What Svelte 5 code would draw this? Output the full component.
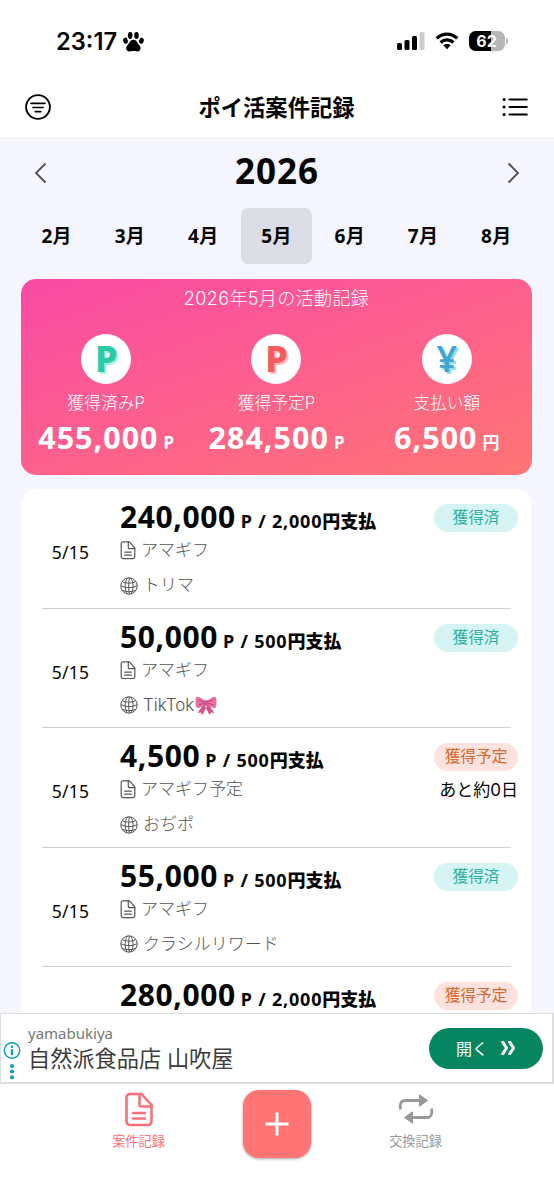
<script lang="ts">
	interface Entry {
		date: string;
		points: string;
		cost: string;
		title: string;
		site: string;
		ribbon?: boolean;
		done: boolean;
		remaining?: string;
	}

	const months = [2, 3, 4, 5, 6, 7, 8];
	let selectedMonth = $state(5);

	const totals = [
		{ kind: 'earned', symbol: 'P', label: '獲得済みP', value: '455,000', unit: 'P' },
		{ kind: 'planned', symbol: 'P', label: '獲得予定P', value: '284,500', unit: 'P' },
		{ kind: 'paid', symbol: '¥', label: '支払い額', value: '6,500', unit: '円' }
	];

	const entries: Entry[] = [
		{ date: '5/15', points: '240,000', cost: '2,000', title: 'アマギフ', site: 'トリマ', done: true },
		{ date: '5/15', points: '50,000', cost: '500', title: 'アマギフ', site: 'TikTok', ribbon: true, done: true },
		{ date: '5/15', points: '4,500', cost: '500', title: 'アマギフ予定', site: 'おぢポ', done: false, remaining: 'あと約0日' },
		{ date: '5/15', points: '55,000', cost: '500', title: 'アマギフ', site: 'クラシルリワード', done: true },
		{ date: '', points: '280,000', cost: '2,000', title: '', site: '', done: false }
	];
</script>

{#snippet docIcon()}
	<svg class="doc" viewBox="0 0 28 34" fill="none" stroke="currentColor" stroke-linejoin="round" stroke-linecap="round">
		<path d="M5 1.5h11.5l10 11V29a3.5 3.5 0 0 1-3.5 3.5H5A3.5 3.5 0 0 1 1.5 29V5A3.5 3.5 0 0 1 5 1.5Z" />
		<path d="M14.5 1.5V12a2 2 0 0 0 2 2h10M8 20.5h12M8 26h12" />
	</svg>
{/snippet}

<div class="screen">
	<div class="status">
		<div class="clock">
			<span>23:17</span>
			<svg class="paw" viewBox="0 0 21 20">
				<ellipse cx="2.5" cy="8.7" rx="2.3" ry="3.1" transform="rotate(-14 2.5 8.7)" />
				<ellipse cx="7.2" cy="3.5" rx="2.3" ry="3.4" />
				<ellipse cx="13.5" cy="3.5" rx="2.3" ry="3.4" />
				<ellipse cx="18.4" cy="8.7" rx="2.3" ry="3.1" transform="rotate(14 18.4 8.7)" />
				<path d="M10.4 7.8c3.200 0 3.800 3.200 5.600 5 2.800 2.800 1.700 6.800-1.700 6.700-1.600 0-2.300-.4-3.900-.4s-2.300.4-3.900.4c-3.400.1-4.500-3.900-1.700-6.700 1.800-1.800 2.400-5 5.600-5Z" />
			</svg>
		</div>
		<div class="system">
			<svg class="signal" viewBox="0 0 28 18">
				<rect x="0" y="11" width="5" height="7" rx="1.5" />
				<rect x="7.5" y="8" width="5" height="10" rx="1.5" />
				<rect x="15" y="4" width="5" height="14" rx="1.5" />
				<rect x="22.5" y="0" width="5" height="18" rx="1.5" fill="#ccc" />
			</svg>
			<svg class="wifi" viewBox="0 0 24 18">
				<path d="M1.700 6.300C7.500.6 16.500.6 22.300 6.300M5.600 10.500c3.600-3.500 9.200-3.500 12.800 0" fill="none" stroke="#000" stroke-width="3.2" />
				<path d="M8.300 13.300c2.200-1.900 5.200-1.900 7.400 0L12 17.300Z" />
			</svg>
			<div class="battery"><span>62</span></div>
		</div>
	</div>

	<header>
		<svg class="filter" viewBox="0 0 26 26" fill="none" stroke="#000" stroke-linecap="round">
			<circle cx="13" cy="13" r="11.9" stroke-width="1.9" />
			<path d="M6 9.300h14M8 13.500h10M10.300 17.600h5.400" stroke-width="1.7" />
		</svg>
		<h1>ポイ活案件記録</h1>
		<svg class="menu" viewBox="0 0 26 20" fill="none" stroke="#000" stroke-linecap="round">
			<path d="M7.500 2.500h17.300M7.500 10h17.300M7.500 17.500h17.300" stroke-width="2" />
			<path d="M2 2.500h.1M2 10h.1M2 17.500h.1" stroke-width="3" />
		</svg>
	</header>

	<main>
		<div class="year">
			<svg viewBox="0 0 12 22"><path d="M11 1.500 1.500 11 11 20.500" /></svg>
			<strong>2026</strong>
			<svg viewBox="0 0 12 22"><path d="m1 1.500 9.500 9.500L1 20.500" /></svg>
		</div>

		<nav class="months">
			{#each months as month}
				<button class:selected={month === selectedMonth} onclick={() => (selectedMonth = month)}>{month}月</button>
			{/each}
		</nav>

		<section class="summary">
			<h2>2026年{selectedMonth}月の活動記録</h2>
			<div class="totals">
				{#each totals as total}
					<div class="total">
						<div class="coin {total.kind}">{total.symbol}</div>
						<div class="label">{total.label}</div>
						<div class="value">{total.value}<small>{total.unit}</small></div>
					</div>
				{/each}
			</div>
		</section>

		<section class="entries">
			{#each entries as entry}
				<article>
					<div class="date">{entry.date}</div>
					<div class="body">
						<div class="amount">{entry.points}<small>P / {entry.cost}<b>円支払</b></small></div>
						<div class="detail">{@render docIcon()}<span>{entry.title}</span></div>
						<div class="detail">
							<svg class="globe" viewBox="0 0 18 18" fill="none" stroke="currentColor">
								<circle cx="9" cy="9" r="8.2" />
								<path d="M7.500.9C4.500 5 4.500 12 7 17M10.500.9c3.300 4.500 3.500 11 .5 16M9.300 1c-.8 5-.8 11 0 16M2.300 4.500c4 2.200 9.500 2.200 13.400 0M1 8.700c5 2.500 11 2.500 16 0M2.200 13.300c4 1.900 9.500 1.900 13.600 0" />
							</svg>
							<span>{entry.site}</span>
							{#if entry.ribbon}
								<svg class="ribbon" viewBox="0 0 22 19">
									<path d="M9 8 2.500 17l3.500-.6 1.500 2.600L12.500 9ZM13 8l6.500 9-3.500-.6-1.500 2.600L9.500 9Z" fill="#d94f8b" />
									<path d="M10 5C6.500 2 3.500.3 1.500.8.2 2 .2 10 1.500 11.800 4 12.500 7 11 10 8.500ZM12 5c3.500-3 6.500-4.700 8.500-4.200 1.300 1.200 1.300 9.200 0 11-2.500.7-5.500-.8-8.500-3.300Z" fill="#ea6fa3" />
									<path d="M9 6 3.500 3.500M9 7.500l-5 1.200M13 6l5.500-2.500M13 7.500l5 1.200" stroke="#bd3d77" fill="none" />
									<rect x="8.7" y="4.3" width="4.6" height="5.4" rx="1.5" fill="#d5538c" />
								</svg>
							{/if}
						</div>
					</div>
					<div class="state">
						<div class="badge" class:done={entry.done}>{entry.done ? '獲得済' : '獲得予定'}</div>
						{#if entry.remaining}<div class="remaining">{entry.remaining}</div>{/if}
					</div>
				</article>
			{/each}
		</section>
	</main>

	<aside>
		<svg class="adinfo" viewBox="0 0 18 40" fill="#0aa2bd">
			<circle cx="9" cy="9.5" r="7.7" fill="none" stroke="#0aa2bd" stroke-width="1.4" />
			<circle cx="9" cy="5.700" r="1.3" />
			<path d="M7.800 8.200h2.400v6H7.800Z" />
			<circle cx="9" cy="25" r="2.1" />
			<circle cx="9" cy="30.5" r="2.1" />
			<circle cx="9" cy="36.300" r="2.1" />
		</svg>
		<div class="adtext">
			<div class="brand">yamabukiya</div>
			<div class="shop">自然派食品店 山吹屋</div>
		</div>
		<button class="open">
			<span>開く</span>
			<svg viewBox="0 0 16 14"><path d="m2 0 4.500 7L2 14M9 0l4.500 7L9 14" /></svg>
		</button>
	</aside>

	<footer>
		<div class="tab active">
			{@render docIcon()}
			<span>案件記録</span>
		</div>
		<button class="add" aria-label="追加">
			<svg viewBox="0 0 24 24"><path d="M12 .5v23M.5 12h23" /></svg>
		</button>
		<div class="tab">
			<svg class="exchange" viewBox="0 0 36 30">
				<path d="M2.300 15.500V11a4.500 4.500 0 0 1 4.500-4.500H22M33.700 14.500V19a4.500 4.500 0 0 1-4.500 4.500H14" fill="none" stroke="#999" stroke-width="2.8" />
				<path d="M21 1.300v10.400q0 1.500 1.200.6l7-5q1-.8 0-1.600l-7-5Q21-.2 21 1.300ZM15 18.300v10.400q0 1.500-1.200.6l-7-5q-1-.8 0-1.600l7-5q1.200-.9 1.200.6Z" fill="#999" />
			</svg>
			<span>交換記録</span>
		</div>
	</footer>
</div>

<style>
	:global(body) {
		margin: 0;
		background: #fff;
	}

	.screen {
		width: 554px;
		height: 1200px;
		display: flex;
		flex-direction: column;
		overflow: hidden;
		background: #fff;
		color: #050505;
		font-family: Inter, 'Noto Sans CJK JP', sans-serif;
	}

	.screen * {
		box-sizing: border-box;
	}

	svg {
		display: block;
		flex: none;
	}

	button {
		padding: 0;
		border: 0;
		background: none;
		color: inherit;
		font: inherit;
	}

	/* Status bar */
	.status {
		height: 82px;
		flex: none;
		display: flex;
		justify-content: space-between;
		padding: 0 47px 0 56px;
	}

	.clock,
	.system {
		display: flex;
		align-items: center;
		height: 82px;
	}

	.clock {
		gap: 6px;
		padding-top: 1px;
		font-size: 23.7px;
		font-weight: 600;
		line-height: 30px;
	}

	.paw {
		width: 21px;
		height: 20px;
	}

	.signal {
		width: 28px;
		height: 18px;
		margin-right: 10px;
	}

	.wifi {
		width: 24px;
		height: 18px;
		margin-right: 10px;
	}

	.battery {
		position: relative;
		width: 36px;
		height: 20px;
		margin-right: 2px;
		padding-right: 1px;
		border-radius: 6.5px;
		background: linear-gradient(90deg, #000 62%, #b5b5b5 62%);
		color: #fff;
		font-size: 16px;
		font-weight: 700;
		line-height: 20px;
		text-align: center;
	}

	.battery::after {
		content: '';
		position: absolute;
		right: -3px;
		top: 7px;
		width: 2px;
		height: 6px;
		border-radius: 0 2px 2px 0;
		background: #b5b5b5;
	}

	/* Title bar */
	header {
		height: 55px;
		flex: none;
		display: flex;
		align-items: center;
		justify-content: space-between;
		padding: 0 26px 6px 25px;
	}

	.filter {
		width: 26px;
		height: 26px;
	}

	.menu {
		width: 26px;
		height: 20px;
	}

	h1 {
		margin: 0;
		padding-bottom: 2px;
		font: 700 22.300px/30px 'Noto Sans CJK JP', sans-serif;
	}

	main {
		height: 876px;
		flex: none;
		overflow: hidden;
		padding: 0 22px 0 21px;
		background: #f5f5ff;
	}

	.year {
		height: 71px;
		display: flex;
		align-items: center;
		justify-content: space-between;
		padding: 0 12px 0 13px;
	}

	.year svg {
		width: 13px;
		height: 22px;
		fill: none;
		stroke: #4d4d52;
		stroke-width: 1.8;
	}

	.year strong,
	.months,
	.value,
	.amount {
		font-family: 'Noto Sans', 'Noto Sans CJK JP', sans-serif;
	}

	.year strong {
		padding-bottom: 3px;
		font-size: 35px;
		line-height: 44px;
		letter-spacing: 1px;
	}

	.months {
		display: flex;
		gap: 2px;
	}

	.months button {
		flex: 1;
		height: 56px;
		padding-bottom: 2px;
		border-radius: 7px;
		font-size: 19px;
		font-weight: 700;
		letter-spacing: 0.3px;
	}

	.months .selected {
		background: #dcdce4;
	}

	/* Monthly totals */
	.summary {
		height: 196px;
		margin-top: 15px;
		border-radius: 15px;
		background: linear-gradient(160deg, #fa4aa5, #ff7575);
		color: #fff;
		text-align: center;
	}

	h2 {
		margin: 0;
		height: 55px;
		font-size: 18px;
		font-weight: 300;
		line-height: 39px;
		letter-spacing: 0.4px;
	}

	.totals {
		display: grid;
		grid-template-columns: repeat(3, 1fr);
	}

	.coin {
		width: 50px;
		height: 50px;
		margin: 0 auto;
		border-radius: 50%;
		background: #fff;
		font-family: 'Noto Sans', sans-serif;
		font-size: 36px;
		font-weight: 800;
		line-height: 50px;
	}

	.earned {
		color: #2acaa4;
		text-shadow: 2px 2px #a5efdb;
	}

	.planned {
		color: #f35d5d;
		text-shadow: 2px 2px #fcb9b4;
	}

	.paid {
		color: #42a5cf;
		font-weight: 600;
		text-shadow: 2px 2px #8bdcf5;
	}

	.label {
		height: 39px;
		font-size: 16.800px;
		font-weight: 300;
		line-height: 39px;
	}

	.value {
		height: 32px;
		font-size: 30.500px;
		font-weight: 700;
		line-height: 29px;
		letter-spacing: 1px;
		white-space: nowrap;
	}

	.value small {
		margin-left: 5px;
		font-size: 17px;
		font-weight: 700;
		letter-spacing: 0;
	}

	/* Records */
	.entries {
		height: 700px;
		margin-top: 15px;
		border-radius: 15px 15px 0 0;
		background: #fff;
	}

	article {
		position: relative;
		display: grid;
		grid-template-columns: 99px 1fr 84px;
		height: 119.600px;
		padding-right: 14px;
	}

	article:first-child {
		margin-top: -1px;
	}

	article::after {
		content: '';
		position: absolute;
		left: 21px;
		right: 21px;
		bottom: 0;
		height: 1px;
		background: #cfcfcf;
	}

	.date {
		padding-top: 50px;
		text-align: center;
		font-family: 'Noto Sans', sans-serif;
		font-size: 17.500px;
		line-height: 26px;
		letter-spacing: 0.3px;
	}

	.amount {
		height: 44px;
		padding-top: 10px;
		font-size: 30px;
		font-weight: 700;
		line-height: 36px;
		letter-spacing: 0.6px;
		white-space: nowrap;
	}

	.amount small {
		margin-left: 5px;
		font-size: 18px;
		font-weight: 700;
		letter-spacing: 0.8px;
	}

	.amount b {
		font-size: 18px;
		letter-spacing: 0;
	}

	.detail {
		display: flex;
		align-items: center;
		height: 35px;
		color: #555;
		font-size: 17px;
		font-weight: 300;
		line-height: 35px;
	}

	.doc {
		width: 16px;
		height: 18.500px;
		margin-right: 5px;
		stroke-width: 2.2;
	}

	.globe {
		width: 18px;
		height: 18px;
		margin-right: 5px;
	}

	.ribbon {
		width: 22px;
		height: 19px;
		margin-left: 1px;
	}

	.state {
		padding-top: 15px;
		text-align: right;
	}

	.badge {
		height: 28px;
		border-radius: 14px;
		background: #ffe1dd;
		color: #d4692f;
		font-size: 15.700px;
		line-height: 27px;
		text-align: center;
	}

	.badge.done {
		background: #d7f4f4;
		color: #2fb0a2;
	}

	.remaining {
		margin-top: 5px;
		font-size: 17px;
		line-height: 28px;
		white-space: nowrap;
	}

	/* Banner */
	aside {
		height: 71px;
		flex: none;
		display: flex;
		align-items: center;
		border: solid #dcdee0;
		border-width: 1px 2px 2px 1px;
		padding: 0 9px 0 2px;
		background: #fff;
		font-family: 'Noto Sans', 'Noto Sans CJK JP', sans-serif;
	}

	.adinfo {
		width: 18px;
		height: 40px;
		margin-top: 25px;
	}

	.adtext {
		flex: 1;
		padding: 0 0 2px 7px;
	}

	.brand {
		color: #777;
		font-size: 15px;
		line-height: 22px;
	}

	.shop {
		color: #3c3c3c;
		font-size: 22.200px;
		line-height: 29px;
	}

	.open {
		width: 114px;
		height: 41px;
		display: flex;
		align-items: center;
		justify-content: center;
		gap: 12px;
		border-radius: 21px;
		background: #058661;
		color: #fff;
		font-size: 16px;
	}

	.open span {
		padding-bottom: 1px;
	}

	.open svg {
		width: 16px;
		height: 14px;
		fill: none;
		stroke: #fff;
		stroke-width: 3;
	}

	/* Tab bar */
	footer {
		flex: 1;
		display: flex;
		padding: 6px 69px 0;
		justify-content: space-between;
	}

	.tab {
		width: 139px;
		display: flex;
		flex-direction: column;
		align-items: center;
		color: #999;
		font-size: 13.200px;
		line-height: 20px;
	}

	.tab .doc {
		width: 28px;
		height: 35px;
		margin: 2px 0 4px;
		stroke-width: 2.6;
	}

	.tab.active {
		color: #fb7077;
	}

	.exchange {
		width: 36px;
		height: 30px;
		margin: 4px 0 7px;
	}

	.add {
		width: 68px;
		height: 68px;
		display: grid;
		place-items: center;
		border-radius: 16px;
		background: #ff7575;
		box-shadow: 0 1px 3px rgba(0, 0, 0, 0.35);
	}

	.add svg {
		width: 24px;
		height: 24px;
		stroke: #fff;
		stroke-width: 3;
	}
</style>
